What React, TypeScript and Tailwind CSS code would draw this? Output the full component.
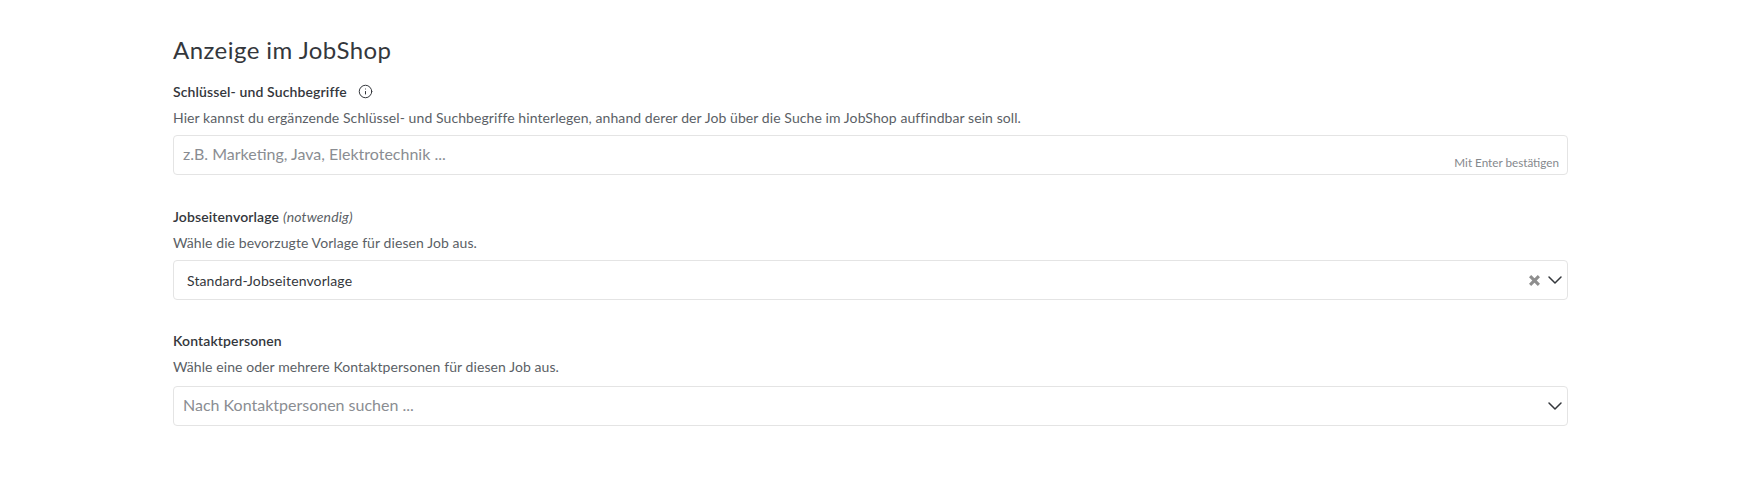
import { ChevronDown, Info } from "lucide-react";

function Field({ label, hint, note, info, top, children }: { label: string; hint: string; note?: string; info?: boolean; top: string; children: React.ReactNode }) {
  return (
    <div className={top}>
      <div className="flex items-center h-6 text-[14px] font-semibold tracking-[0.12px] text-[#34373c]">
        <span>{label}</span>
        {note && <span className="ml-1 font-normal italic text-[#5b5f66]">{note}</span>}
        {info && <Info className="ml-[11px] w-[15px] h-[15px] text-[#34373c]" strokeWidth={1.6} />}
      </div>
      <p className="mt-[3px] mb-[5px] h-6 leading-6 text-[14px] tracking-[0.08px] text-[#5b5f66]">{hint}</p>
      {children}
    </div>
  );
}

function ClearIcon() {
  return (
    <svg className="w-[11px] h-[11px] mr-[3px] text-[#8e8e8e]" viewBox="0 0 10 10" fill="none" stroke="currentColor" strokeWidth="2.8">
      <path d="M1 1l8 8M9 1l-8 8" />
    </svg>
  );
}

export default function App() {
  return (
    <div className="h-[492px] bg-white pl-[173px] pr-[172px] pt-[34px] font-['Lato','Liberation_Sans',sans-serif]">
      <h2 className="h-8 leading-8 text-[24px] tracking-[0.45px] text-[#34373c]">Anzeige im JobShop</h2>
      <Field top="mt-[13px]" label="Schlüssel- und Suchbegriffe" info hint="Hier kannst du ergänzende Schlüssel- und Suchbegriffe hinterlegen, anhand derer der Job über die Suche im JobShop auffindbar sein soll.">
        <div className="relative h-10 border border-[#e4e4e4] rounded flex items-center pl-[9px] pb-[2px] text-[16px] text-[#8a8d92]">
          z.B. Marketing, Java, Elektrotechnik ...
          <span className="absolute right-2 bottom-[2px] text-[11.7px] text-[#85888d]">Mit Enter bestätigen</span>
        </div>
      </Field>
      <Field top="mt-[29px]" label="Jobseitenvorlage" note="(notwendig)" hint="Wähle die bevorzugte Vorlage für diesen Job aus.">
        <div className="h-10 border border-[#e4e4e4] rounded flex items-center pl-[13px] text-[14px] tracking-[0.12px] text-[#34373c]">
          <span className="flex-1">Standard-Jobseitenvorlage</span>
          <ClearIcon />
          <ChevronDown className="w-6 h-6 text-[#34373c]" strokeWidth={1.5} />
        </div>
      </Field>
      <Field top="mt-[28px]" label="Kontaktpersonen" hint="Wähle eine oder mehrere Kontaktpersonen für diesen Job aus.">
        <div className="pt-[2px]">
          <div className="h-10 border border-[#e4e4e4] rounded flex items-center pl-[9px] text-[16px] text-[#8a8d92]">
            <span className="flex-1 pb-[2px]">Nach Kontaktpersonen suchen ...</span>
            <ChevronDown className="w-6 h-6 text-[#34373c]" strokeWidth={1.5} />
          </div>
        </div>
      </Field>
    </div>
  );
}
